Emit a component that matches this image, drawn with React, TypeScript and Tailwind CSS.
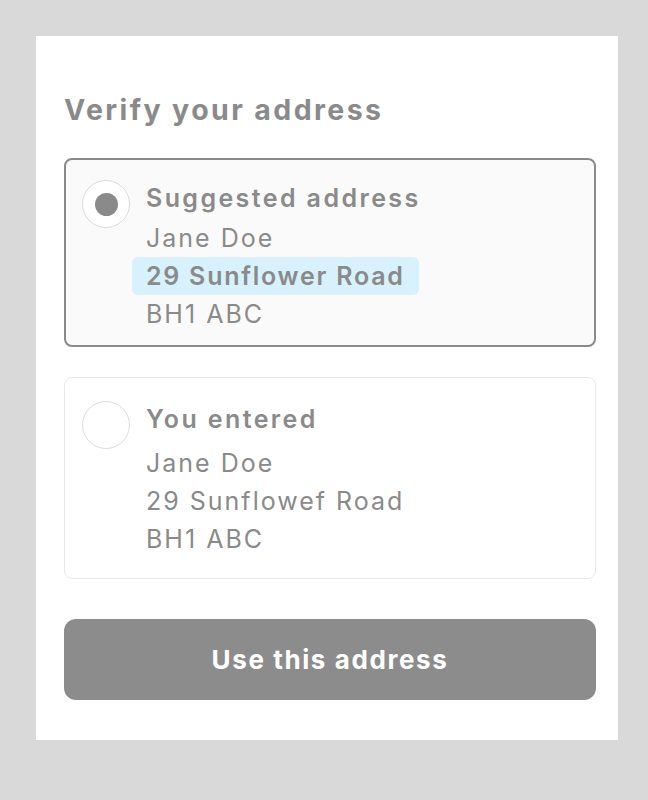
import { useState } from "react";

const addresses = [
  {
    id: "suggested",
    title: "Suggested address",
    lines: ["Jane Doe", "29 Sunflower Road", "BH1 ABC"],
    highlight: 1,
  },
  {
    id: "entered",
    title: "You entered",
    lines: ["Jane Doe", "29 Sunflowef Road", "BH1 ABC"],
    highlight: -1,
  },
];

const Radio = ({ checked }: { checked: boolean }) => (
  <div className="w-[48px] h-[48px] shrink-0 rounded-full border-[1.5px] border-[#dcdcdc] bg-white flex items-center justify-center">
    {checked && <div className="w-[23px] h-[23px] rounded-full bg-[#8a8a8a]" />}
  </div>
);

export default function App() {
  const [selected, setSelected] = useState("suggested");

  return (
    <div
      className="min-h-screen bg-[#d9d9d9] pt-[36px] pl-[36px] text-[#8a8a8a]"
      style={{ fontFamily: 'Inter, "Open Sans", sans-serif' }}
    >
      <div className="w-[582px] h-[704px] bg-white pt-[55px] pl-[28px]">
        <h1 className="text-[28.5px] leading-[38px] font-bold tracking-[2.4px]">Verify your address</h1>

        <div className="mt-[29px] w-[532px] flex flex-col gap-[30px]">
          {addresses.map((a) => {
            const active = selected === a.id;
            return (
              <div
                key={a.id}
                onClick={() => setSelected(a.id)}
                className={
                  active
                    ? "flex gap-[16px] rounded-[8px] border-2 border-[#8a8a8a] bg-[#fafafa] pl-[16px] pt-[19px] pb-[12px] cursor-pointer"
                    : "flex gap-[16px] rounded-[8px] border border-[#e8e8e8] bg-white pl-[17px] pt-[22px] pb-[20px] cursor-pointer"
                }
              >
                <div className="pt-[1px]">
                  <Radio checked={active} />
                </div>
                <div className="flex flex-col text-[25px] leading-[38px] tracking-[2px]">
                  <div
                    className={
                      active
                        ? "font-semibold tracking-[2.4px] mb-[2px]"
                        : "font-semibold tracking-[2.4px] mb-[6px]"
                    }
                  >
                    {a.title}
                  </div>
                  {a.lines.map((line, i) =>
                    i === a.highlight ? (
                      <div
                        key={i}
                        className="-ml-[14px] self-start rounded-[6px] bg-[#d7f2fc] px-[14px] font-semibold tracking-[1.75px]"
                      >
                        {line}
                      </div>
                    ) : (
                      <div key={i}>{line}</div>
                    )
                  )}
                </div>
              </div>
            );
          })}
        </div>

        <button className="mt-[40px] w-[532px] h-[81px] rounded-[12px] bg-[#8c8c8c] text-white text-[26px] font-bold tracking-[1.6px]">
          Use this address
        </button>
      </div>
    </div>
  );
}
